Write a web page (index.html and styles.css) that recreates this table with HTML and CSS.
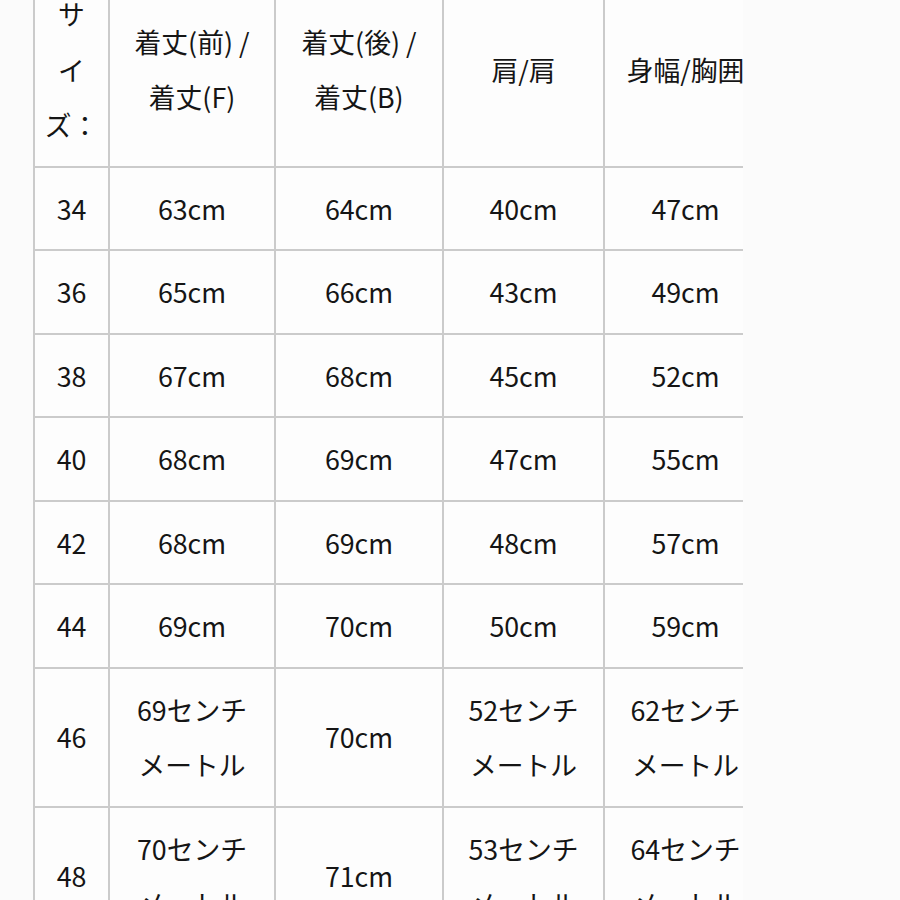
FILE: index.html
```html
<!DOCTYPE html>
<html lang="ja">
<head>
<meta charset="utf-8">
<link rel="stylesheet" href="styles.css">
</head>
<body>
<div class="wrap">
<table class="size">
<colgroup>
<col class="c1"><col class="c2"><col class="c3"><col class="c4"><col class="c5">
</colgroup>
<tr class="head"><td>サ<br>イ<br>ズ：</td><td>着丈(前) /<br>着丈(F)</td><td>着丈(後) /<br>着丈(B)</td><td>肩/肩</td><td>身幅/胸囲</td></tr>
<tr><td>34</td><td>63cm</td><td>64cm</td><td>40cm</td><td>47cm</td></tr>
<tr><td>36</td><td>65cm</td><td>66cm</td><td>43cm</td><td>49cm</td></tr>
<tr><td>38</td><td>67cm</td><td>68cm</td><td>45cm</td><td>52cm</td></tr>
<tr><td>40</td><td>68cm</td><td>69cm</td><td>47cm</td><td>55cm</td></tr>
<tr><td>42</td><td>68cm</td><td>69cm</td><td>48cm</td><td>57cm</td></tr>
<tr><td>44</td><td>69cm</td><td>70cm</td><td>50cm</td><td>59cm</td></tr>
<tr><td>46</td><td>69センチ<br>メートル</td><td>70cm</td><td>52センチ<br>メートル</td><td>62センチ<br>メートル</td></tr>
<tr><td>48</td><td>70センチ<br>メートル</td><td>71cm</td><td>53センチ<br>メートル</td><td>64センチ<br>メートル</td></tr>
</table>
</div>
</body>
</html>
```
FILE: styles.css
```css
html, body {
  margin: 0;
  padding: 0;
  background: #fbfbfb;
  overflow: hidden;
  height: 900px;
}
.wrap {
  margin-left: 33px;
  margin-top: -29px;
  width: 710px;
  overflow: hidden;
}
.size {
  border-collapse: collapse;
  table-layout: fixed;
  width: 733px;
  font-family: "Noto Sans CJK JP", "Noto Sans", sans-serif;
  font-size: 26.8px;
  line-height: 55.5px;
  color: #151515;
  background: #fdfdfd;
}
.c1 { width: 75px; }
.c2 { width: 166px; }
.c3 { width: 168px; }
.c4 { width: 161px; }
.c5 { width: 163px; }
.size td {
  border: 2px solid #cbcbcb;
  padding: 13px 0;
  text-align: center;
  vertical-align: middle;
  white-space: nowrap;
}
```
